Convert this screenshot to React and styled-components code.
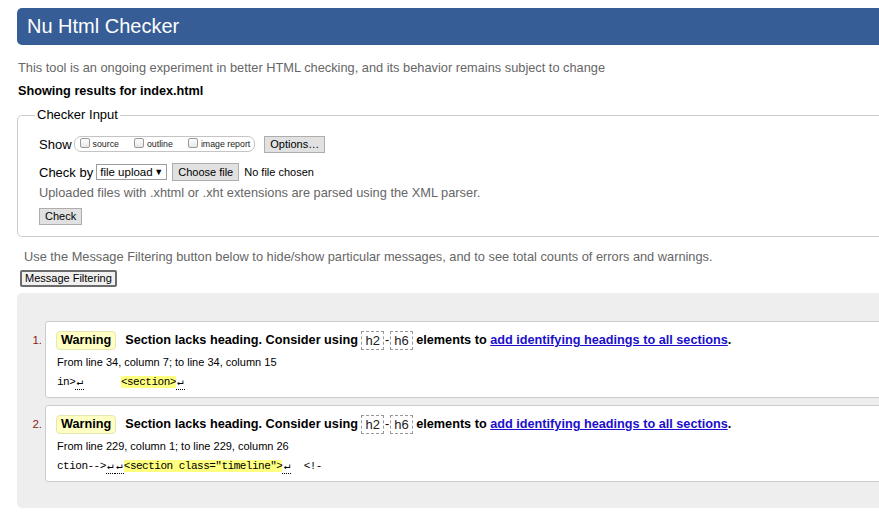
import React from "react";
import styled, { createGlobalStyle } from "styled-components";

const GlobalStyle = createGlobalStyle`
  html, body {
    margin: 0;
    padding: 0;
    overflow: hidden;
    background: #fff;
  }
  body {
    font-family: "Liberation Sans", Arial, sans-serif;
    color: #000;
  }
`;

const Page = styled.div`
  width: 1010px;
  padding-top: 8px;
`;

const Header = styled.h1`
  margin: 0 0 0 17px;
  height: 37px;
  line-height: 37px;
  padding-left: 10px;
  background: #365d95;
  color: #fff;
  font-size: 20px;
  font-weight: normal;
  border-radius: 5px 0 0 5px;
`;

const Intro = styled.p`
  margin: 14px 0 0 18px;
  font-size: 12.8px;
  line-height: 18px;
  color: #666;
`;

const Results = styled.h2`
  margin: 5px 0 0 18px;
  font-size: 12.7px;
  line-height: 18px;
  font-weight: bold;
`;

const InputSet = styled.fieldset`
  margin: 7px 0 0 17px;
  padding: 11px 0 11px 21px;
  border: 1px solid #ccc;
  border-radius: 5px;
  min-width: 0;
`;

const Legend = styled.legend`
  margin-left: -4px;
  padding: 0 2px;
  font-size: 13px;
  line-height: 16px;
`;

const Row = styled.div`
  display: flex;
  align-items: center;
  height: ${({ $h }) => $h || 20}px;
  margin-top: ${({ $mt }) => $mt || 0}px;
  font-size: 13px;
`;

const ShowBox = styled.div`
  display: flex;
  align-items: center;
  height: 14px;
  margin-left: 2px;
  padding: 0 4px 0 5px;
  border: 1px solid #c4c4c4;
  border-radius: 7px;
`;

const Choice = styled.label`
  display: flex;
  align-items: center;
  font-size: 8.8px;
  color: #222;
  margin-right: ${({ $mr }) => $mr || 0}px;
`;

const Box = styled.input.attrs({ type: "checkbox" })`
  appearance: none;
  width: 10px;
  height: 10px;
  margin: 0 3px 2px 0;
  border: 1px solid #9a9a9a;
  border-radius: 2px;
  background: linear-gradient(#fcfcfc, #e8e8e8);
`;

const Button = styled.button`
  height: ${({ $h }) => $h || 17}px;
  padding: 0 5px;
  margin: 0;
  font-family: "Liberation Sans", Arial, sans-serif;
  font-size: 11px;
  line-height: 1;
  color: #000;
  background: #e1e1e1;
  border: 1px solid #adadad;
  border-radius: 0;
  margin-left: ${({ $ml }) => $ml || 0}px;
`;

const Select = styled.div`
  display: flex;
  align-items: center;
  justify-content: space-between;
  box-sizing: border-box;
  width: 71px;
  height: 16px;
  margin-left: 3px;
  padding: 0 3px 0 3px;
  border: 1px solid #9c9c9c;
  font-size: 11.5px;
  white-space: nowrap;
  background: #fff;
`;

const Arrow = styled.span`
  font-size: 9px;
`;

const Small = styled.span`
  font-size: 11px;
  margin-left: 5px;
`;

const Note = styled.div`
  margin-top: ${({ $mt }) => $mt || 0}px;
  margin-left: ${({ $ml }) => $ml || 0}px;
  font-size: 12.8px;
  line-height: 18px;
  color: #666;
`;

const FilterButton = styled.button`
  display: block;
  height: 17px;
  margin: 4px 0 0 20px;
  padding: 0 3px;
  font-family: "Liberation Sans", Arial, sans-serif;
  font-size: 11px;
  line-height: 1;
  color: #000;
  background: #f0f0f0;
  border: 2px solid #6b6b6b;
  border-radius: 2px;
`;

const MessageList = styled.ol`
  list-style: none;
  margin: 6px 0 0 17px;
  padding: 28px 0 26px 10px;
  background: #eee;
  border-radius: 5px 0 0 5px;
  display: flex;
  flex-direction: column;
  gap: 7px;
`;

const Item = styled.li`
  display: flex;
  align-items: flex-start;
`;

const Num = styled.span`
  width: 15px;
  margin: 9px 3px 0 0;
  text-align: right;
  font-size: 11.5px;
  line-height: 20px;
  color: #8a1a1a;
`;

const Card = styled.div`
  flex: 1;
  padding: 8px 10px 7px 10px;
  background: #fff;
  border: 1px solid #ccc;
  border-radius: 3px 0 0 3px;
`;

const Message = styled.p`
  display: flex;
  align-items: center;
  margin: 0;
  height: 20px;
  font-size: 12.7px;
  font-weight: bold;
  white-space: pre;
`;

const Badge = styled.span`
  padding: 0 4px;
  margin-right: 9px;
  line-height: 17px;
  background: #ffffc4;
  border: 1px solid #e6e6b0;
  border-radius: 4px;
`;

const Tag = styled.code`
  font-family: "Liberation Sans", Arial, sans-serif;
  font-weight: normal;
  font-size: 13px;
  line-height: 17px;
  padding: 0 3px;
  color: #222;
  border: 1px dashed #999;
`;

const Dash = styled.span`
  font-weight: normal;
  padding: 0 1px;
`;

const Link = styled.a`
  color: #1b0fcc;
  text-decoration: underline;
`;

const Location = styled.p`
  margin: 4px 0 0 1px;
  font-size: 11px;
  line-height: 16px;
`;

const Extract = styled.p`
  margin: 4px 0 0 1px;
  font-family: "Liberation Mono", "DejaVu Sans Mono", monospace;
  font-size: 11px;
  letter-spacing: -0.5px;
  line-height: 16px;
  white-space: pre;
`;

const Mark = styled.mark`
  background: #ffff80;
  color: inherit;
`;

const Ret = styled.span`
  display: inline-block;
  width: 9px;
  line-height: 13px;
  text-align: center;
  border-bottom: 1px dotted #000;
`;

const messages = [
  {
    n: 1,
    from: "From line 34, column 7; to line 34, column 15",
    extract: (
      <>
        in&gt;<Ret>↵</Ret>{"      "}<Mark>&lt;section&gt;</Mark><Ret>↵</Ret>
      </>
    ),
  },
  {
    n: 2,
    from: "From line 229, column 1; to line 229, column 26",
    extract: (
      <>
        ction--&gt;<Ret>↵</Ret><Ret>↵</Ret><Mark>&lt;section class="timeline"&gt;</Mark><Ret>↵</Ret>{"  "}&lt;!-
      </>
    ),
  },
];

export default function App() {
  return (
    <Page>
      <GlobalStyle />
      <Header>Nu Html Checker</Header>
      <Intro>
        This tool is an ongoing experiment in better HTML checking, and its behavior remains subject to change
      </Intro>
      <Results>Showing results for index.html</Results>
      <InputSet>
        <Legend>Checker Input</Legend>
        <Row>
          Show
          <ShowBox>
            <Choice $mr={15}><Box />source</Choice>
            <Choice $mr={15}><Box />outline</Choice>
            <Choice><Box />image report</Choice>
          </ShowBox>
          <Button $ml={9}>Options…</Button>
        </Row>
        <Row $mt={8}>
          Check by
          <Select>
            <span>file upload</span>
            <Arrow>▼</Arrow>
          </Select>
          <Button $ml={5} $h={18}>Choose file</Button>
          <Small>No file chosen</Small>
        </Row>
        <Note $mt={2}>Uploaded files with .xhtml or .xht extensions are parsed using the XML parser.</Note>
        <Row $mt={6} $h={17}>
          <Button>Check</Button>
        </Row>
      </InputSet>
      <Note $mt={11} $ml={24}>
        Use the Message Filtering button below to hide/show particular messages, and to see total counts of errors and warnings.
      </Note>
      <FilterButton>Message Filtering</FilterButton>
      <MessageList>
        {messages.map((m) => (
          <Item key={m.n}>
            <Num>{m.n}.</Num>
            <Card>
              <Message>
                <Badge>Warning</Badge>
                {"Section lacks heading. Consider using "}
                <Tag>h2</Tag>
                <Dash>-</Dash>
                <Tag>h6</Tag>
                {" elements to "}
                <Link href="#">add identifying headings to all sections</Link>.
              </Message>
              <Location>{m.from}</Location>
              <Extract>{m.extract}</Extract>
            </Card>
          </Item>
        ))}
      </MessageList>
    </Page>
  );
}
